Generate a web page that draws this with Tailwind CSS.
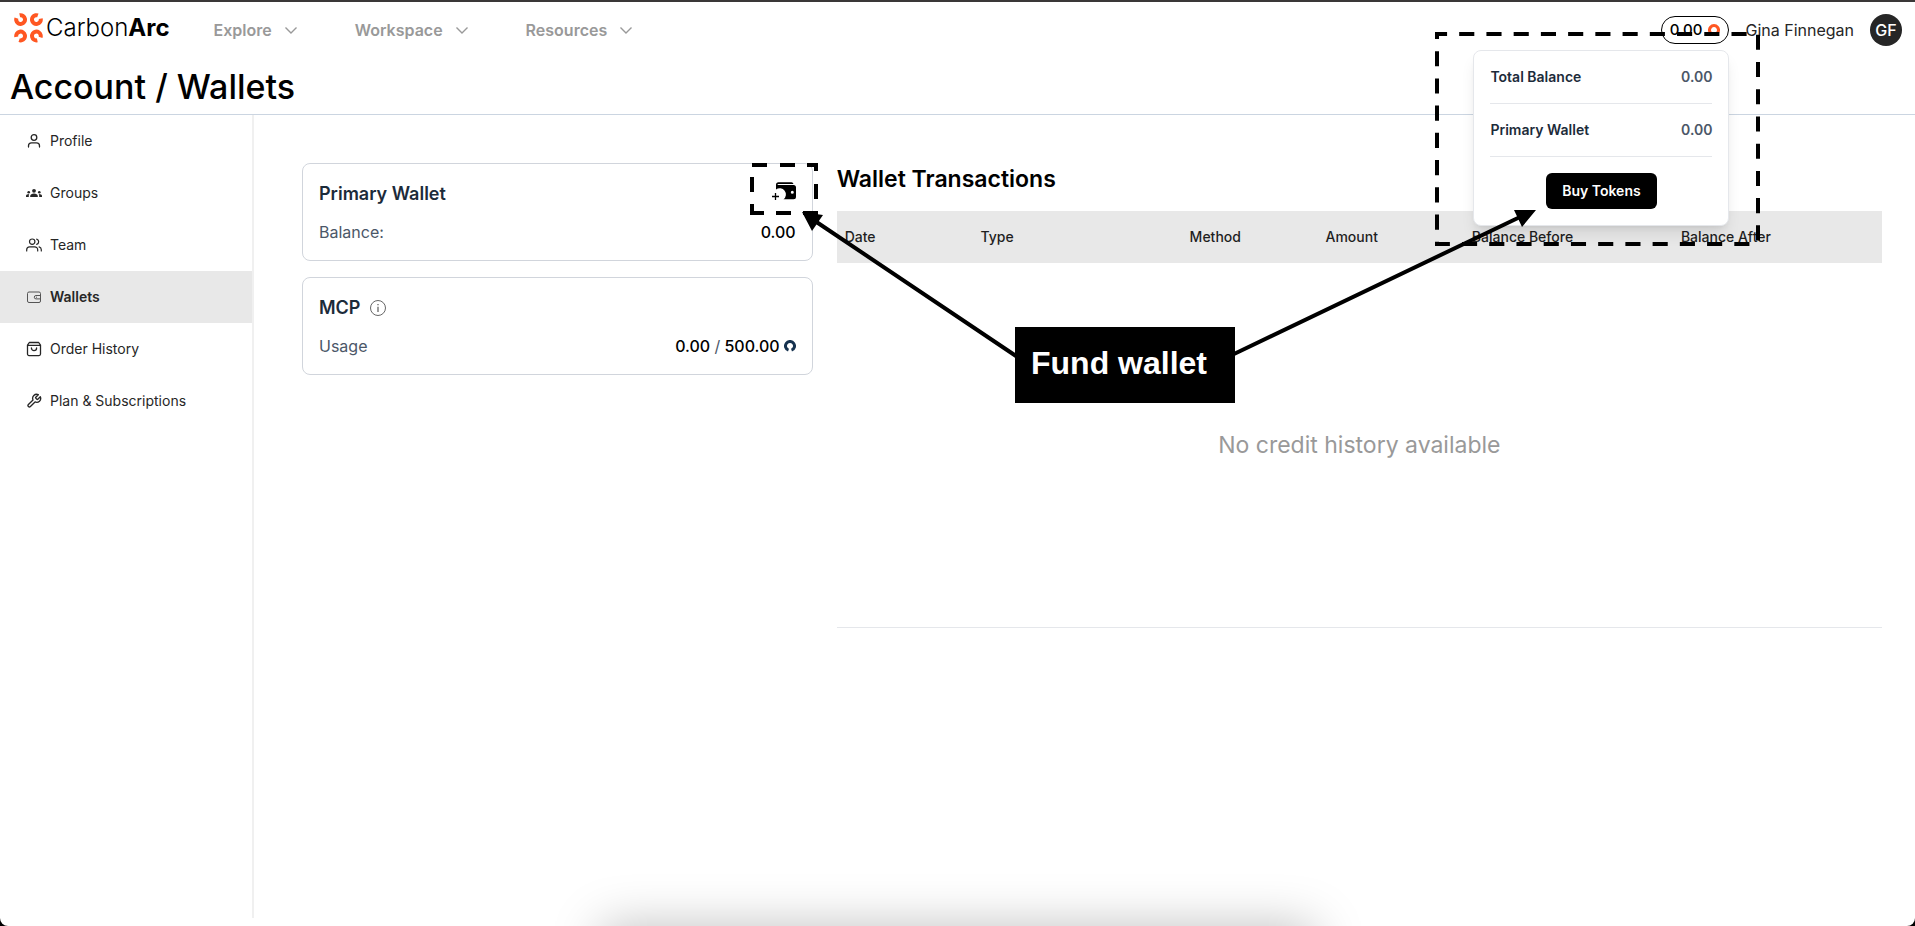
<!DOCTYPE html>
<html lang="en" class="h-full bg-black">
<head>
    <meta charset="UTF-8">
    <meta name="viewport" content="width=device-width, initial-scale=1.0">
    <title>Account / Wallets - CarbonArc</title>
    <script src="https://cdn.jsdelivr.net/npm/@tailwindcss/browser@4"></script>
</head>
<body class="h-full bg-black font-['Inter',sans-serif] text-black">
    <div class="relative flex min-h-full flex-col overflow-hidden rounded-b-lg border-t-2 border-[#3a3838] bg-white">
        <!-- Header -->
        <header class="border-b border-[#cbd5e1]">
            <div class="flex h-14 items-center pl-3.5 pr-[13px]">
                <a href="#" class="mr-11 flex items-center gap-0.5">
                    <svg class="mb-1 size-[30px]" viewBox="0 0 30 30" fill="none" stroke="#ff5722" stroke-width="4" stroke-dasharray="22.6 5">
                        <circle cx="6.600" cy="6.600" r="4.400" transform="rotate(-102 6.600 6.600)" />
                        <circle cx="22.400" cy="6.600" r="4.400" transform="rotate(-12 22.400 6.600)" />
                        <circle cx="22.400" cy="23" r="4.400" transform="rotate(78 22.400 23)" />
                        <circle cx="6.600" cy="23" r="4.400" transform="rotate(168 6.600 23)" />
                    </svg>
                    <span class="pb-1 text-2xl font-light">Carbon<b class="font-bold">Arc</b></span>
                </a>
                <nav class="flex items-center gap-14 font-semibold text-[#999]">
                    <button class="flex items-center gap-[11px]">Explore
                        <svg class="size-4" viewBox="0 0 16 16" fill="none" stroke="currentColor" stroke-width="1.4"><path d="M2.5 5.5 8 11l5.5-5.5" /></svg>
                    </button>
                    <button class="flex items-center gap-[11px]">Workspace
                        <svg class="size-4" viewBox="0 0 16 16" fill="none" stroke="currentColor" stroke-width="1.4"><path d="M2.5 5.5 8 11l5.5-5.5" /></svg>
                    </button>
                    <button class="flex items-center gap-[11px]">Resources
                        <svg class="size-4" viewBox="0 0 16 16" fill="none" stroke="currentColor" stroke-width="1.4"><path d="M2.5 5.5 8 11l5.5-5.5" /></svg>
                    </button>
                </nav>
                <div class="ml-auto flex items-center gap-4">
                    <div class="relative">
                        <button class="flex h-7 items-center gap-1.5 rounded-full border border-black px-2 text-[15px] font-medium">0.00
                            <svg class="size-3" viewBox="0 0 12 12" fill="none" stroke="#ff5722" stroke-width="3"><path d="M3.800 10A4.500 4.500 0 1 1 8.200 10" /></svg>
                        </button>
                        <!-- Balance popover -->
                        <div class="absolute top-[34px] right-0 z-10 flex w-64 flex-col rounded-lg border border-gray-200 bg-white p-4 text-sm shadow-lg">
                            <div class="flex justify-between border-b border-gray-200 pb-4">
                                <span class="font-semibold text-[#1c2b3a]">Total Balance</span>
                                <span class="font-semibold text-[#4b5768]">0.00</span>
                            </div>
                            <div class="flex justify-between border-b border-gray-200 py-4">
                                <span class="font-semibold text-[#1c2b3a]">Primary Wallet</span>
                                <span class="font-semibold text-[#4b5768]">0.00</span>
                            </div>
                            <button class="mt-4 h-9 self-center rounded-md bg-black px-4 font-semibold text-white">Buy Tokens</button>
                        </div>
                    </div>
                    <span class="text-[#262626]">Gina Finnegan</span>
                    <span class="flex size-8 items-center justify-center rounded-full bg-[#262626] font-medium text-white">GF</span>
                </div>
            </div>
            <h1 class="flex h-14 items-center px-2.5 text-[34px] font-medium">Account / Wallets</h1>
        </header>

        <div class="flex grow">
            <!-- Sidebar -->
            <nav class="mb-2 w-[254px] shrink-0 border-r-2 border-[#f0f0f0] text-sm text-[#262626]">
                <a href="#" class="flex h-[52px] items-center gap-2 pl-[26px]">
                    <svg class="size-4" viewBox="0 0 16 16" fill="none" stroke="currentColor" stroke-width="1.3" stroke-linecap="round"><circle cx="8" cy="4.5" r="2.8" /><path d="M2.5 14v-1.2a3 3 0 0 1 3-3h5a3 3 0 0 1 3 3V14" /></svg>
                    Profile
                </a>
                <a href="#" class="flex h-[52px] items-center gap-2 pl-[26px]">
                    <svg class="size-4" viewBox="0 0 16 16" fill="currentColor"><circle cx="8" cy="5.8" r="1.9" /><path d="M4.2 12v-1.1c0-1.5 1.8-2.4 3.8-2.4s3.8.9 3.8 2.4V12z" /><circle cx="2.7" cy="7.2" r="1.3" /><circle cx="13.3" cy="7.2" r="1.3" /><path d="M0 12v-1c0-1.200 1.300-1.900 3.300-1.900-.4.500-.500 1-.500 1.600V12zM16 12v-1c0-1.200-1.300-1.900-3.300-1.900.4.500.500 1 .500 1.600V12z" /></svg>
                    Groups
                </a>
                <a href="#" class="flex h-[52px] items-center gap-2 pl-[26px]">
                    <svg class="size-4" viewBox="0 0 16 16" fill="none" stroke="currentColor" stroke-width="1.2" stroke-linecap="round"><circle cx="6.2" cy="4.700" r="2.700" /><path d="M.7 14v-1.200a3 3 0 0 1 3-3h5a3 3 0 0 1 3 3V14M10.700 2.100a2.700 2.700 0 0 1 0 5.200M15.300 14v-1.200a3 3 0 0 0-2.200-2.900" /></svg>
                    Team
                </a>
                <a href="#" class="flex h-[52px] items-center gap-2 bg-[#e8e8e8] pl-[26px] font-semibold">
                    <svg class="size-4" viewBox="0 0 16 16" fill="none" stroke="#555" stroke-width="1"><rect x="1.500" y="3" width="13" height="10.500" rx="1.500" /><path d="M14.500 6.500H10a1.700 1.700 0 0 0 0 3.400h4.500" /><path d="M10 8.200h1" /></svg>
                    Wallets
                </a>
                <a href="#" class="flex h-[52px] items-center gap-2 pl-[26px]">
                    <svg class="size-4" viewBox="0 0 16 16" fill="none" stroke="currentColor" stroke-width="1.300" stroke-linecap="round" stroke-linejoin="round"><path d="M3.300 1.500h9.400l1.800 2.600v9a1.500 1.500 0 0 1-1.500 1.500H3a1.500 1.500 0 0 1-1.500-1.500v-9zM1.500 4.400h13M10.600 7a2.600 2.600 0 0 1-5.200 0" /></svg>
                    Order History
                </a>
                <a href="#" class="flex h-[52px] items-center gap-2 pl-[26px]">
                    <svg class="size-4" viewBox="0 0 24 24" fill="none" stroke="currentColor" stroke-width="2" stroke-linecap="round" stroke-linejoin="round"><path d="M14.700 6.300a1 1 0 0 0 0 1.400l1.600 1.600a1 1 0 0 0 1.400 0l3.770-3.770a6 6 0 0 1-7.940 7.940l-6.910 6.910a2.120 2.120 0 0 1-3-3l6.910-6.910a6 6 0 0 1 7.940-7.940z" /></svg>
                    Plan &amp; Subscriptions
                </a>
            </nav>

            <main class="grid grow grid-cols-3 content-start gap-6 py-12 pr-[33px] pl-12">
                <!-- Wallet cards -->
                <div class="flex flex-col gap-4">
                    <section class="flex h-[98px] flex-col justify-between rounded-lg border border-gray-300 p-4">
                        <div class="flex items-center justify-between">
                            <h2 class="text-lg font-semibold text-[#1c2b3a]">Primary Wallet</h2>
                            <button aria-label="Fund wallet">
                                <svg class="size-6" viewBox="0 2 24 24" fill="currentColor"><path fill-rule="evenodd" d="M6.500 4H21.500a2.200 2.200 0 0 0-2-1.700H6.500A2.500 2.500 0 0 0 4 4.800V9.500a6 6 0 0 1 7.500 9.800H21.500A2.500 2.500 0 0 0 24 16.800V7.500a2.500 2.500 0 0 0-2.500-2.500H5.500A1 1 0 0 1 6.500 4zM20.300 10.800a1.500 1.500 0 1 1 0 3 1.500 1.500 0 0 1 0-3z" /><path d="M3.500 13v7M0 16.500h7" stroke="currentColor" stroke-width="1.300" /></svg>
                            </button>
                        </div>
                        <div class="flex items-center justify-between">
                            <span class="text-[#4b5768]">Balance:</span>
                            <span class="font-medium">0.00</span>
                        </div>
                    </section>
                    <section class="flex h-[98px] flex-col justify-between rounded-lg border border-gray-300 p-4">
                        <div class="flex items-center gap-2.5">
                            <h2 class="text-lg font-semibold text-[#1c2b3a]">MCP</h2>
                            <svg class="size-4" viewBox="0 0 16 16" fill="none" stroke="#666"><circle cx="8" cy="8" r="7.500" /><path d="M8 6.700V12M8 4v1.300" stroke-width="1.300" /></svg>
                        </div>
                        <div class="flex items-center justify-between">
                            <span class="text-[#4b5768]">Usage</span>
                            <span class="flex items-center gap-1 font-medium">
                                <span>0.00 <span class="font-normal text-[#4b5768]">/</span> 500.00</span>
                                <svg class="size-3" viewBox="0 0 12 12" fill="none" stroke="#16324f" stroke-width="3"><path d="M4.500 10.200A4.500 4.500 0 1 1 7.500 10.200" /></svg>
                            </span>
                        </div>
                    </section>
                </div>

                <!-- Transactions -->
                <section class="col-span-2">
                    <h2 class="mb-4 text-[23px] leading-8 font-semibold">Wallet Transactions</h2>
                    <table class="w-full table-fixed border-b border-gray-200 text-sm">
                        <thead class="bg-[#e8e8e8] text-left text-[#1f1f1f]">
                            <tr class="h-[52px]">
                                <th class="w-[13%] px-2 font-medium">Date</th>
                                <th class="w-[20%] px-2 font-medium">Type</th>
                                <th class="w-[13%] px-2 font-medium">Method</th>
                                <th class="w-[14%] px-2 font-medium">Amount</th>
                                <th class="w-[20%] px-2 font-medium">Balance Before</th>
                                <th class="w-[20%] px-2 font-medium">Balance After</th>
                            </tr>
                        </thead>
                        <tbody>
                            <tr class="h-[364px]">
                                <td colspan="6" class="text-center text-[23px] leading-8 text-[#999]">No credit history available</td>
                            </tr>
                        </tbody>
                    </table>
                </section>
            </main>
        </div>

        <!-- Shadow of the dock below the window -->
        <div class="absolute top-full left-1/2 h-20 w-[712px] -translate-x-1/2 shadow-[0_0_50px_rgba(0,0,0,0.25)]"></div>

        <!-- Callouts -->
        <svg class="pointer-events-none absolute -top-0.5 left-0 z-20 h-[926px] w-[1915px]" viewBox="0 0 1915 926" fill="none" stroke="#000" stroke-width="4">
            <path d="M752 165H816V213H752Z" stroke-dasharray="15 13 15 12 15 13 15 12 15 12 15 12 21 12 15 12" />
            <path d="M1437 34H1758V244H1437Z" pathLength="1053" stroke-dasharray="15 12" stroke-dashoffset="5" />
            <path d="M1016 356 815 221M1234 354 1520 217" />
            <path d="M802 212 823 215 812 231ZM1536 210 1514 210 1522 227Z" fill="#000" stroke="none" />
        </svg>
        <div class="absolute top-[325px] left-[1015px] z-20 flex h-[76px] w-[220px] items-center bg-black pb-1 pl-4 font-['Liberation_Sans',sans-serif] text-[32px] font-bold text-white">Fund wallet</div>
    </div>
</body>
</html>
